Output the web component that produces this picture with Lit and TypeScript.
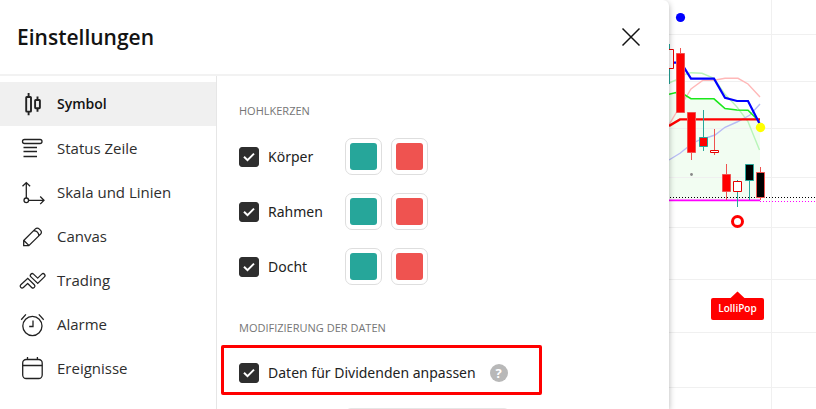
import { LitElement, html, svg, css } from "lit";
import { customElement, property, state } from "lit/decorators.js";
import { classMap } from "lit/directives/class-map.js";

const icons: Record<string, unknown> = {
  symbol: svg`
    <g stroke-width="1.9">
      <rect x="8.200" y="7" width="4.800" height="14.600" rx=".6" />
      <path d="M10.600 3v4M10.600 21.600v3.600" />
      <rect x="17.100" y="10" width="4.800" height="8.200" rx=".6" />
      <path d="M19.500 6.400v3.600M19.500 18.200v3.600" />
    </g>`,
  status: svg`
    <rect x="4.500" y="5.500" width="19.500" height="4" rx="2" />
    <path d="M5.500 13.500H19M5.500 17.500H19M5.500 22.500H19" />`,
  scale: svg`
    <circle cx="8.300" cy="22.300" r="2.300" />
    <path d="M8.300 20V4.700M4.500 8.300l3.800-3.700 3.800 3.700M10.600 22.300H26M22.200 18.500l3.800 3.800-3.800 3.800" />`,
  canvas: svg`
    <path d="M5.700 18.500 17.400 6.900a2.600 2.600 0 0 1 3.700 0l1.500 1.500a2.600 2.600 0 0 1 0 3.700L10.800 23.600H5.700zM5.900 18.500l4.900 4.900M15.700 8.700c3 .2 5 2.100 5.200 5.200" />`,
  trading: svg`
    <g stroke-linecap="round">
      <path stroke-width="5" d="M4.100 20.100 9.700 14.900 15 20.100" />
      <path class="hollow" stroke-width="2.500" d="M4.100 20.100 9.700 14.900 15 20.100" />
      <path stroke-width="5" d="M14.200 9.500 19.700 14.700 25.100 9.500" />
      <path class="hollow" stroke-width="2.500" d="M14.200 9.500 19.700 14.700 25.100 9.500" />
    </g>`,
  alarm: svg`
    <circle cx="14.400" cy="16" r="9.600" />
    <path d="M15 10.500v6h-3.800M3.200 9.700l4.700-5.300M20.800 4.400l4.900 5.300" />`,
  events: svg`
    <rect x="4.700" y="5.500" width="19.500" height="19" rx="3.500" />
    <path d="M4.700 11.500h19.500M9.500 3v2.500M19.400 3v2.500" />`,
};

@customElement("settings-nav")
export class SettingsNav extends LitElement {
  @state() private active = "symbol";

  private items = [
    ["symbol", "Symbol"],
    ["status", "Status Zeile"],
    ["scale", "Skala und Linien"],
    ["canvas", "Canvas"],
    ["trading", "Trading"],
    ["alarm", "Alarme"],
    ["events", "Ereignisse"],
  ];

  static styles = css`
    :host {
      display: block;
      padding-top: 6px;
    }
    nav {
      display: flex;
      flex-direction: column;
    }
    .item {
      display: flex;
      align-items: center;
      gap: 11px;
      height: 44px;
      padding: 0 18px;
      border: 0;
      background: none;
      color: #2e2e2e;
      font: inherit;
      text-align: left;
      cursor: pointer;
    }
    .item.active {
      background: #f0f0f0;
      color: #131313;
      font-size: 14px;
      font-weight: 600;
    }
    .icon {
      flex: none;
      width: 28px;
      height: 28px;
      fill: none;
      stroke: #222;
      stroke-width: 1.3;
    }
    .hollow {
      stroke: #fff;
    }
  `;

  render() {
    return html`<nav>
      ${this.items.map(
        ([id, label]) => html`<button
          class=${classMap({ item: true, active: id === this.active })}
          @click=${() => (this.active = id)}
        >
          <svg class="icon" viewBox="0 0 28 28" aria-hidden="true">${icons[id]}</svg>
          <span>${label}</span>
        </button>`
      )}
    </nav>`;
  }
}

@customElement("check-option")
export class CheckOption extends LitElement {
  @property() label = "";

  static styles = css`
    :host {
      display: block;
      font-family: "Noto Sans", sans-serif;
      font-size: 14px;
    }
    label {
      display: flex;
      align-items: center;
      gap: 9px;
      cursor: pointer;
    }
    .box {
      display: grid;
      flex: none;
    }
    .box > * {
      grid-area: 1 / 1;
    }
    input {
      appearance: none;
      width: 20px;
      height: 20px;
      margin: 0;
      border: 1px solid #2e2e2e;
      border-radius: 3px;
    }
    input:checked {
      background: #2e2e2e;
    }
    .tick {
      width: 20px;
      height: 20px;
      fill: none;
      stroke: #fff;
      stroke-width: 2;
      pointer-events: none;
    }
  `;

  render() {
    return html`<label>
      <span class="box">
        <input type="checkbox" checked />
        <svg class="tick" viewBox="0 0 20 20" aria-hidden="true"><path d="M5 9.800 8.500 13.200 15 6.600" /></svg>
      </span>
      <span>${this.label}</span>
    </label>`;
  }
}

@customElement("price-chart")
export class PriceChart extends LitElement {
  private rows = [34, 81, 128, 177, 227, 279, 332, 387];

  static styles = css`
    :host {
      display: block;
      overflow: hidden;
      background: #fff;
    }
    svg {
      display: block;
      width: 100%;
      height: 100%;
      fill: none;
    }
    .grid {
      stroke: #f0f0f0;
    }
    .area {
      fill: #f2fdf2;
    }
    .up {
      stroke: #26a69a;
    }
    .down {
      stroke: #ef5350;
    }
    .open {
      fill: #fff;
      stroke: #e60000;
    }
    .red {
      fill: #f00;
    }
    .black {
      fill: #000;
    }
    .tag {
      fill: #fff;
      font: 600 10px "Open Sans", sans-serif;
      text-anchor: middle;
    }
  `;

  render() {
    return html`<svg viewBox="669 0 147 409" preserveAspectRatio="xMinYMin slice" role="img" aria-label="Chart">
      <path class="area" d="M669 94 676 92.500 685 95 691 98.800H714L725 108.500 737 110H748L760 122V200H669Z" />
      <g class="grid">
        ${this.rows.map((y) => svg`<path d="M669 ${y + 0.5}H1200" />`)}
        <path d="M771.500 0V900" />
      </g>
      <g stroke-width="1.400">
        <path stroke="#b9f5b9" d="M669 83 676 80 685 74.500 691 72.700 702 73.300 714 78.300 725 94.300 737 107 748 121.700 759.500 150" />
        <path stroke="#ffb8b8" d="M669 125 676 113 685 99 691 89 703 80.300H714L725 78.300H738L748 84 760 97" />
        <path stroke="#b8bcf4" d="M669 160 680 153.300 691.500 144 698 140.600 715 135 725 127.300 737 122 750 115 760 104" />
      </g>
      <path stroke="#1be81b" stroke-width="1.600" d="M669 94.300 676 92.500 685 95 691 98.800H714L725 108.500 737 110 748 110.300 759.500 121.500" />
      <path stroke="#f00" stroke-width="2.400" d="M669 126 680 119.400H760" />
      <path stroke="#00f" stroke-width="2.200" d="M669 62.700H681L691 78.700H714L725 97.700 737 101H748L759.500 123.500" />
      <path stroke="#f0f" stroke-width="1.800" d="M669 200.400H760" />
      <path stroke="#000" stroke-dasharray="1 2" d="M670 197.500H1200" />
      <path stroke="#f0f" stroke-dasharray="1 2" d="M760 201.500H1200" />

      <path class="up" d="M669.500 44V84" />
      <path class="open" d="M665 49.500H673.500V68.500H665Z" />
      <path class="down" d="M680.500 48V53M691.500 152V160M714.500 129V155M726.500 164V200M760.500 167V200" />
      <path class="up" d="M703.500 110V151M737.500 180V207M749.500 180V200" />
      <path class="down red" d="M676.500 53.500h8v59h-8zM687.500 112.500h8v40h-8zM722.500 174.500h8v17h-8z" />
      <path class="up red" d="M699.500 137.500h8v9h-8z" />
      <path class="open" d="M710.500 150.500h8v2h-8zM733.500 181.500h8v10h-8z" />
      <path class="up black" d="M745.500 164.500h8v16h-8z" />
      <path class="down black" d="M756.500 172.500h8v25h-8z" />

      <circle cx="691.500" cy="174.500" r="1.400" fill="#888" />
      <circle cx="680.500" cy="17.500" r="4.600" fill="#00f" />
      <circle cx="760.500" cy="127.500" r="4.700" fill="#ff0" />
      <circle cx="737.500" cy="221.500" r="5" stroke="#f00" stroke-width="3" />
      <path class="red" d="M730 298.500 737.500 291.500 745 298.500Z" />
      <rect class="red" x="711" y="298" width="53" height="22" rx="2" />
      <text class="tag" x="737.500" y="312">LolliPop</text>
    </svg>`;
  }
}

@customElement("app-root")
export class AppRoot extends LitElement {
  private candleParts = ["Körper", "Rahmen", "Docht"];

  static styles = css`
    :host {
      display: flex;
      height: 100vh;
      overflow: hidden;
      background: #fff;
      color: #222;
      font: 15px/20px "Open Sans", sans-serif;
    }
    .dialog {
      z-index: 1;
      flex: 1;
      display: flex;
      flex-direction: column;
      min-width: 0;
      background: #fff;
      border-top-right-radius: 6px;
      box-shadow: 0 2px 6px rgba(0, 0, 0, 0.3);
    }
    price-chart {
      flex: 0 0 147px;
    }
    header {
      flex: none;
      display: flex;
      align-items: center;
      justify-content: space-between;
      height: 74px;
      padding: 0 24px 0 17px;
      border-bottom: 2px solid #f2f2f2;
    }
    h1 {
      margin: 0;
      color: #131313;
      font-size: 21px;
      font-weight: 600;
      line-height: 28px;
    }
    .close {
      display: flex;
      padding: 0;
      border: 0;
      background: none;
      cursor: pointer;
    }
    .close svg {
      width: 28px;
      height: 28px;
      stroke: #131313;
      stroke-width: 1.5;
    }
    .body {
      flex: 1;
      display: grid;
      grid-template-columns: 216px 1fr;
      min-height: 0;
    }
    .panel {
      padding: 25px 22px;
      border-left: 1px solid #e6e6e6;
      overflow: hidden;
    }
    h2 {
      margin: 0;
      color: #757575;
      font-size: 11px;
      font-weight: 400;
      line-height: 20px;
    }
    .rows {
      padding: 8px 0 24px;
    }
    .row {
      display: grid;
      grid-template-columns: 97px auto auto;
      justify-content: start;
      align-items: center;
      column-gap: 9px;
      height: 55px;
    }
    .swatch {
      width: 37px;
      height: 37px;
      padding: 4px;
      border: 1px solid #dedede;
      border-radius: 7px;
      background: #fff;
      cursor: pointer;
    }
    .swatch::before {
      content: "";
      display: block;
      height: 27px;
      border-radius: 3px;
      background: currentColor;
    }
    .rise {
      color: #26a69a;
    }
    .fall {
      color: #ef5350;
    }
    .marked {
      display: flex;
      align-items: center;
      gap: 14px;
      width: 321px;
      height: 50px;
      box-sizing: border-box;
      margin: 7px 0 13px -18px;
      padding: 5px 15px 0;
      border: 3px solid #f00;
      border-radius: 2px;
    }
    .help {
      width: 18px;
      height: 18px;
      padding: 0;
      border: 0;
      border-radius: 50%;
      background: #b8b8b8;
      color: #fff;
      font: 700 13px/18px "Open Sans", sans-serif;
    }
    .session {
      display: block;
      width: 165px;
      height: 34px;
      margin-left: 106px;
      border: 1px solid #e6e6e6;
      border-radius: 6px;
      background: #fff;
      appearance: none;
    }
  `;

  render() {
    return html`
      <section class="dialog" role="dialog" aria-labelledby="title">
        <header>
          <h1 id="title">Einstellungen</h1>
          <button class="close" aria-label="Schließen">
            <svg viewBox="0 0 28 28"><path d="M5.500 5.500 22.500 22.500M22.500 5.500 5.500 22.500" /></svg>
          </button>
        </header>
        <div class="body">
          <settings-nav></settings-nav>
          <div class="panel">
            <h2>HOHLKERZEN</h2>
            <div class="rows">
              ${this.candleParts.map(
                (part) => html`<div class="row">
                  <check-option label=${part}></check-option>
                  <button class="swatch rise" aria-label="${part} steigend"></button>
                  <button class="swatch fall" aria-label="${part} fallend"></button>
                </div>`
              )}
            </div>
            <h2>MODIFIZIERUNG DER DATEN</h2>
            <div class="marked">
              <check-option label="Daten für Dividenden anpassen"></check-option>
              <button class="help" aria-label="Hilfe">?</button>
            </div>
            <select class="session" aria-label="Sitzung"></select>
          </div>
        </div>
      </section>
      <price-chart></price-chart>
    `;
  }
}
